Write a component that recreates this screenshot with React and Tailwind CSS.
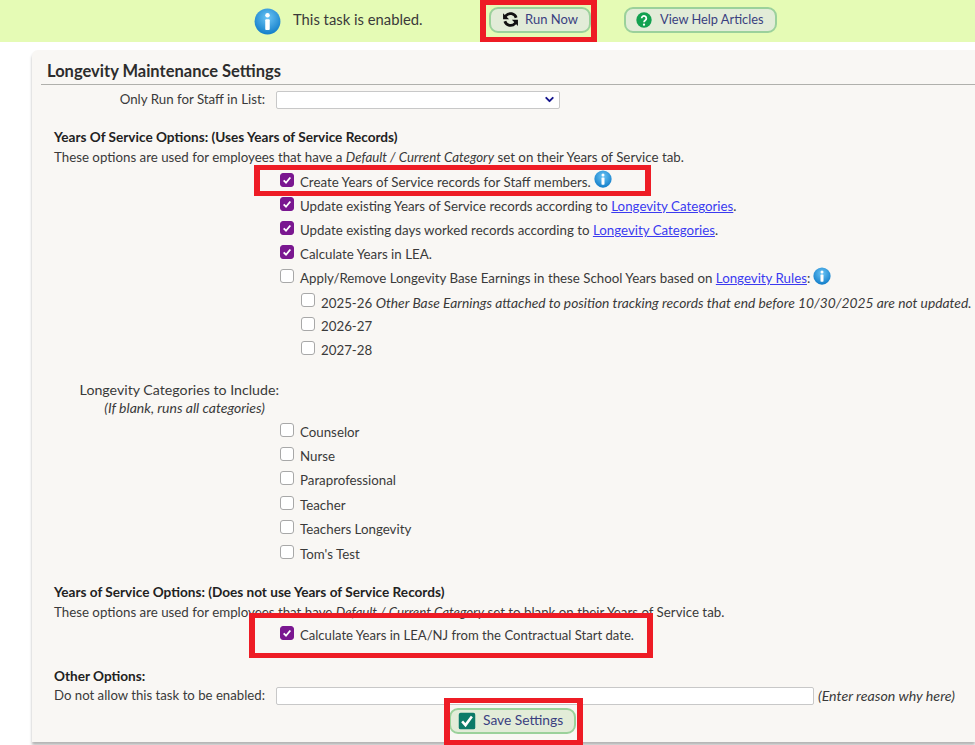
import React from 'react';
import { ChevronDown } from 'lucide-react';

const InfoIcon = ({ size = 18 }) => (
  <svg width={size} height={size} viewBox="0 0 24 24" className="shrink-0">
    <defs>
      <radialGradient id="infoGrad" cx="50%" cy="35%" r="70%">
        <stop offset="0%" stopColor="#6cc5f5" />
        <stop offset="100%" stopColor="#0b78c6" />
      </radialGradient>
    </defs>
    <circle cx="12" cy="12" r="11.5" fill="url(#infoGrad)" />
    <circle cx="12" cy="6.5" r="2" fill="#fff" />
    <rect x="10" y="10" width="4" height="9.5" rx="0.8" fill="#fff" />
  </svg>
);

const RefreshIcon = () => (
  <svg width="17" height="17" viewBox="0 0 24 24" className="shrink-0" fill="none" stroke="#111" strokeWidth="4">
    <path d="M20 9.5A8.5 8.5 0 0 0 5.6 6.5L3.5 9" />
    <path d="M4 14.5a8.5 8.5 0 0 0 14.4 3l2.100-2.500" />
    <path d="M1.500 3V11.500H10z" fill="#111" stroke="none" />
    <path d="M22.500 21V12.500H14z" fill="#111" stroke="none" />
  </svg>
);

const HelpIcon = () => (
  <svg width="16" height="16" viewBox="0 0 24 24" className="shrink-0">
    <circle cx="12" cy="12" r="11.500" fill="#12a150" />
    <path d="M8.500 9.500a3.500 3.500 0 1 1 5.500 2.900c-1.200.8-2 1.400-2 3" fill="none" stroke="#fff" strokeWidth="2.600" />
    <circle cx="12" cy="19" r="1.700" fill="#fff" />
  </svg>
);

const SaveIcon = () => (
  <svg width="18" height="18" viewBox="0 0 24 24" className="shrink-0">
    <rect x="1" y="1" width="22" height="22" rx="2.500" fill="#0b7a68" />
    <path d="M5.500 12.500l4.500 5L18.500 6" fill="none" stroke="#fff" strokeWidth="3.400" />
  </svg>
);

const Check = ({ on }) => (
  <span className={`mb-[6px] flex h-[14px] w-[14px] shrink-0 items-center justify-center rounded-[3px] border-[1.500px] ${on ? 'border-[#7a1790] bg-[#7a1790]' : 'border-[#a8a8a8] bg-white'}`}>
    {on && (
      <svg width="10" height="10" viewBox="0 0 12 12">
        <path d="M2 6.500l2.800 2.800L10 3" fill="none" stroke="#fff" strokeWidth="2.200" />
      </svg>
    )}
  </span>
);

const Link = ({ children }) => <a className="text-[#3b3bf0] underline">{children}</a>;

const Row = ({ on, h = 'h-[24px]', indent, children }) => (
  <div className={`flex items-center gap-[6px] ${h} ${indent ? 'pl-[269px]' : 'pl-[248px]'}`}>
    <Check on={on} />
    <span className="whitespace-nowrap">{children}</span>
  </div>
);

const PillButton = ({ icon, children, className }) => (
  <button className={`flex items-center rounded-[9px] border-2 border-[#9bd19b] bg-[#e2ecd8] text-[#3a3f80] ${className}`}>
    {icon}
    <span>{children}</span>
  </button>
);

const Annotation = ({ className }) => (
  <div className={`pointer-events-none absolute border-x-[6px] border-y-[5px] border-[#ee1c25] ${className}`} />
);

export default function App() {
  return (
    <div className="relative h-[745px] w-[975px] overflow-hidden bg-white font-['Lato','Noto_Sans',sans-serif] text-[13.300px] text-[#3a3a3a]">
      {/* enabled banner */}
      <div className="flex h-[42px] items-center bg-[#e5fbb5] pl-[254px]">
        <InfoIcon size={27} />
        <span className="mb-[3px] ml-[12px] w-[196px] text-[14.800px]">This task is enabled.</span>
        <PillButton icon={<RefreshIcon />} className="mb-[3px] h-[26px] w-[102px] gap-[6px] pl-[11px] text-[13px]">Run Now</PillButton>
        <PillButton icon={<HelpIcon />} className="mb-[3px] ml-[33px] h-[26px] w-[153px] gap-[8px] pl-[10px] text-[12.800px]">View Help Articles</PillButton>
      </div>

      {/* settings card */}
      <div className="ml-[32px] mt-[8px] h-[692px] w-[943px] rounded-tl-[6px] bg-[#f9f7f4] shadow-[0_3px_3px_#b5b5b5]">
        <div className="flex h-[34px] items-end pl-[15px] text-[16.500px] font-bold text-[#2d2d2d]">Longevity Maintenance Settings</div>
        <div className="ml-[9px] h-[1px] bg-[#b0b0ac]" />
        <div className="flex h-[24px] items-center pt-[5px]">
          <span className="w-[233px] text-right">Only Run for Staff in List:</span>
          <div className="ml-[11px] flex h-[18px] w-[284px] items-center justify-end rounded-[2px] border border-[#c8c8c8] bg-white pr-[3px]">
            <ChevronDown size={13} strokeWidth={3.500} className="text-[#14148c]" />
          </div>
        </div>

        <div className="mt-[18px] h-[20px] pl-[22px] text-[13.600px] font-bold leading-[20px] text-[#222]">Years Of Service Options: (Uses Years of Service Records)</div>
        <div className="h-[20px] pl-[22px] leading-[20px]">These options are used for employees that have a <i>Default / Current Category</i> set on their Years of Service tab.</div>

        <div className="mt-[4px] flex h-[24px] items-center">
          <Row on>Create Years of Service records for Staff members.</Row>
          <span className="mb-[9px] ml-[3px]"><InfoIcon size={18} /></span>
        </div>
        <Row on>Update existing Years of Service records according to <Link>Longevity Categories</Link>.</Row>
        <Row on>Update existing days worked records according to <Link>Longevity Categories</Link>.</Row>
        <Row on>Calculate Years in LEA.</Row>
        <div className="flex h-[24.400px] items-center">
          <Row>Apply/Remove Longevity Base Earnings in these School Years based on <Link>Longevity Rules</Link>:</Row>
          <span className="mb-[6px] ml-[3px]"><InfoIcon size={18} /></span>
        </div>
        <Row indent>2025-26 <i className="text-[13.800px]">Other Base Earnings attached to position tracking records that end before 10/30/2025 are not updated.</i></Row>
        <Row indent>2026-27</Row>
        <Row indent>2027-28</Row>

        <div className="mt-[17px] h-[20px] w-[247px] text-right text-[14.200px] leading-[20px]">Longevity Categories to Include:</div>
        <div className="h-[16px] w-[233px] text-right text-[14px] leading-[16px]"><i>(If blank, runs all categories)</i></div>

        <div className="mt-[4px]">
          <Row h="h-[24.400px]">Counselor</Row>
          <Row h="h-[24.400px]">Nurse</Row>
          <Row h="h-[24.400px]">Paraprofessional</Row>
          <Row h="h-[24.400px]">Teacher</Row>
          <Row h="h-[24.400px]">Teachers Longevity</Row>
          <Row h="h-[24.400px]">Tom's Test</Row>
        </div>

        <div className="mt-[15px] h-[20px] pl-[22px] text-[13.600px] font-bold leading-[20px] text-[#222]">Years of Service Options: (Does not use Years of Service Records)</div>
        <div className="h-[20px] pl-[22px] leading-[20px]">These options are used for employees that have <i>Default / Current Category</i> set to blank on their Years of Service tab.</div>
        <div className="mt-[2px] text-[13.100px]">
          <Row on>Calculate Years in LEA/NJ from the Contractual Start date.</Row>
        </div>

        <div className="mt-[18px] h-[20px] pl-[22px] text-[13.600px] font-bold leading-[20px] text-[#222]">Other Options:</div>
        <div className="flex h-[20px] items-center pl-[22px]">
          <span className="w-[222px] text-[13.200px]">Do not allow this task to be enabled:</span>
          <div className="h-[18px] w-[538px] rounded-[2px] border border-[#c8c8c8] bg-white" />
          <i className="ml-[4px] text-[14.200px]">(Enter reason why here)</i>
        </div>
        <div className="pl-[417px] pt-[2px]">
          <PillButton icon={<SaveIcon />} className="h-[26px] w-[127px] gap-[7px] pl-[7px] text-[13.800px]">Save Settings</PillButton>
        </div>
      </div>

      {/* red call-outs from the screenshot */}
      <Annotation className="left-[480px] top-0 h-[42px] w-[117px]" />
      <Annotation className="left-[254px] top-[165px] h-[31px] w-[397px]" />
      <Annotation className="left-[249px] top-[613px] h-[45px] w-[404px]" />
      <Annotation className="left-[444px] top-[698px] h-[47px] w-[139px]" />
    </div>
  );
}
